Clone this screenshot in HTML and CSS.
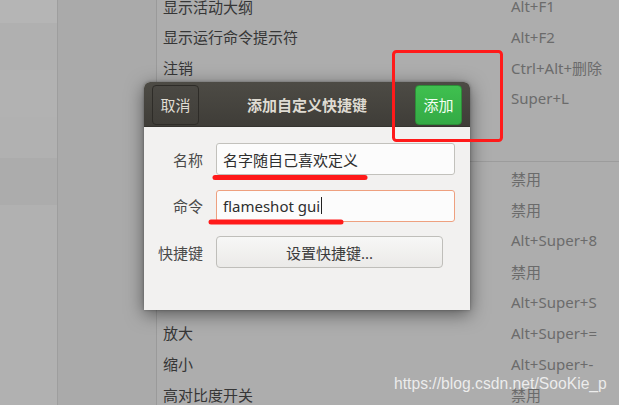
FILE: index.html
```html
<!DOCTYPE html>
<html lang="zh-CN">
<head>
<meta charset="utf-8">
<title>添加自定义快捷键</title>
<link rel="stylesheet" href="styles.css">
</head>
<body>
<div class="app">
  <aside class="sidebar">
    <div class="sb-row sb-a"></div>
    <div class="sb-row sb-b"></div>
    <div class="sb-row sb-c"></div>
    <div class="sb-row sb-d"></div>
    <div class="sb-row sb-e"></div>
    <div class="sb-row sb-f"></div>
  </aside>
  <div class="middle"></div>
  <main class="content">
    <div class="list first">
      <div class="row"><span class="name">显示活动大纲</span><span class="key">Alt+F1</span></div>
      <div class="row"><span class="name">显示运行命令提示符</span><span class="key">Alt+F2</span></div>
      <div class="row"><span class="name">注销</span><span class="key">Ctrl+Alt+删除</span></div>
      <div class="row"><span class="name"></span><span class="key">Super+L</span></div>
    </div>
    <div class="section-head"></div>
    <div class="list second">
      <div class="row"><span class="name"></span><span class="key">禁用</span></div>
      <div class="row"><span class="name"></span><span class="key">禁用</span></div>
      <div class="row"><span class="name"></span><span class="key">Alt+Super+8</span></div>
      <div class="row"><span class="name"></span><span class="key">禁用</span></div>
      <div class="row"><span class="name"></span><span class="key">Alt+Super+S</span></div>
      <div class="row"><span class="name">放大</span><span class="key">Alt+Super+=</span></div>
      <div class="row"><span class="name">缩小</span><span class="key">Alt+Super+-</span></div>
      <div class="row"><span class="name">高对比度开关</span><span class="key">禁用</span></div>
    </div>
  </main>
</div>

<div class="dialog">
  <header class="dlg-head">
    <button class="hbtn cancel">取消</button>
    <div class="dlg-title">添加自定义快捷键</div>
    <button class="hbtn add">添加</button>
  </header>
  <div class="dlg-body">
    <label class="flabel">名称</label>
    <div class="field">名字随自己喜欢定义</div>
    <label class="flabel">命令</label>
    <div class="field focused">flameshot gui<span class="caret"></span></div>
    <label class="flabel">快捷键</label>
    <div class="setkey">设置快捷键...</div>
  </div>
</div>

<svg class="annot" width="619" height="405" viewBox="0 0 619 405">
  <rect x="393.5" y="51.5" width="108" height="89" rx="3" fill="none" stroke="#ff1a1a" stroke-width="3"/>
  <line x1="215" y1="177.5" x2="365" y2="177.5" stroke="#ff1a1a" stroke-width="5" stroke-linecap="round"/>
  <line x1="211" y1="222" x2="341" y2="222" stroke="#ff1a1a" stroke-width="5" stroke-linecap="round"/>
</svg>

<div class="watermark">https://blog.csdn.net/SooKie_p</div>
</body>
</html>
```

FILE: styles.css
```css
html, body {
  margin: 0;
  padding: 0;
}
body {
  width: 619px;
  height: 405px;
  overflow: hidden;
  position: relative;
  background: #ababab;
  font-family: "Noto Sans", "Noto Sans CJK SC", sans-serif;
  font-size: 15px;
}
.app {
  display: flex;
  height: 405px;
}
.sidebar {
  width: 57px;
  flex: none;
  display: flex;
  flex-direction: column;
  border-right: 1px solid #9e9e9e;
}
.sb-row { flex: none; }
.sb-a { height: 23px; background: #b5b5b5; }
.sb-b { height: 47px; background: #b0b0b0; }
.sb-c { height: 47px; background: #b2b2b2; }
.sb-d { height: 41px; background: #b1b1b1; }
.sb-e { height: 47px; background: #acacac; }
.sb-f { flex: 1; background: #b1b1b1; }
.middle {
  width: 98px;
  flex: none;
  background: #aaaaaa;
  border-right: 1px solid #9a9a9a;
}
.content {
  flex: 1;
  background: #adadad;
  display: flex;
  flex-direction: column;
}
.list.first {
  margin-top: -9px;
}
.row {
  display: flex;
  align-items: center;
  height: 30.6px;
  flex: none;
}
.list.second .row { height: 30.8px; }
.name {
  flex: 1;
  padding-left: 6px;
  color: #363636;
  white-space: nowrap;
}
.key {
  width: 108px;
  flex: none;
  color: #6b6b6b;
  white-space: nowrap;
}
.section-head {
  height: 47px;
  flex: none;
  border-bottom: 1px solid #9c9c9c;
  margin-top: 1px;
}
.list.second {
  margin-top: 1px;
}

/* dialog */
.dialog {
  position: absolute;
  left: 144px;
  top: 82px;
  width: 326px;
  height: 228px;
  border-radius: 6px 6px 0 0;
  background: #f2f1f0;
  box-shadow: 0 4px 18px rgba(0, 0, 0, 0.5), 0 0 3px rgba(0,0,0,0.3);
  display: flex;
  flex-direction: column;
  overflow: hidden;
}
.dlg-head {
  height: 45px;
  flex: none;
  display: flex;
  align-items: center;
  justify-content: space-between;
  padding: 0 8px;
  background: linear-gradient(#4d4b45, #3f3d38);
  border-bottom: 1px solid #35332f;
  box-sizing: border-box;
}
.dlg-title {
  color: #dfdbd2;
  font-weight: bold;
  font-size: 15px;
}
.hbtn {
  width: 47px;
  height: 40px;
  border-radius: 4px;
  font-family: "Noto Sans", "Noto Sans CJK SC", sans-serif;
  font-size: 15px;
  padding: 0;
  margin-top: 1px;
}
.cancel {
  background: linear-gradient(#4a4843, #413f3a);
  border: 1px solid #2e2c28;
  color: #dfdbd2;
}
.add {
  background: linear-gradient(#3fc04f, #34aa45);
  border: 1px solid #2d8d38;
  color: #f4fff4;
}
.dlg-body {
  flex: 1;
  display: grid;
  grid-template-columns: 59px 239px;
  grid-auto-rows: 32px;
  column-gap: 13px;
  row-gap: 14.5px;
  padding-top: 16px;
  align-content: start;
}
.flabel {
  justify-self: end;
  align-self: center;
  color: #4a4a4a;
  white-space: nowrap;
}
.field {
  border: 1px solid #c2c1bc;
  border-radius: 3px;
  background: #fcfcfc;
  color: #2e2e2e;
  padding-left: 6px;
  display: flex;
  align-items: center;
  box-sizing: border-box;
}
.field.focused {
  border-color: #eea07f;
}
.caret {
  display: inline-block;
  width: 1px;
  height: 17px;
  background: #222;
  margin-left: 1px;
}
.setkey {
  width: 227px;
  border: 1px solid #bfbeba;
  border-radius: 4px;
  background: linear-gradient(#f7f7f6, #ebeae8);
  color: #3c3c3c;
  display: flex;
  align-items: center;
  justify-content: center;
  box-sizing: border-box;
}

.annot {
  position: absolute;
  left: 0;
  top: 0;
  pointer-events: none;
}
.watermark {
  position: absolute;
  left: 394px;
  top: 375px;
  font-family: "Liberation Sans", Arial, sans-serif;
  font-size: 15.7px;
  color: rgba(255, 255, 255, 0.78);
  white-space: nowrap;
}
```
